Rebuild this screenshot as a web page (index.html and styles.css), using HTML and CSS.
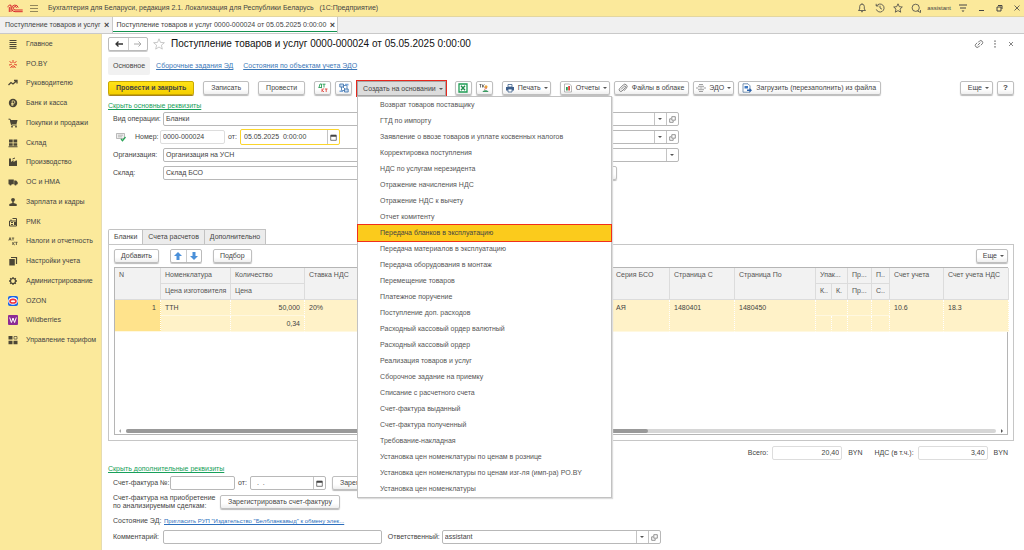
FILE: index.html
```html
<!DOCTYPE html>
<html lang="ru">
<head>
<meta charset="utf-8">
<title>Поступление товаров и услуг</title>
<link rel="stylesheet" href="styles.css">
</head>
<body>
<svg class="defs" aria-hidden="true">
  <symbol id="open" viewBox="0 0 10 10"><path d="M4 1h5v5H4zM3 4H1v5h5V7" fill="none" stroke="#666"/></symbol>
  <symbol id="cal" viewBox="0 0 10 10"><path d="M1 2h8v7H1z" fill="#fff" stroke="#444"/><path d="M1 1h8v3H1z" fill="#444"/></symbol>
</svg>

<header class="topbar">
  <svg class="logo" viewBox="0 0 16 9"><path d="M.5 2.800 2.500 1.200H4V8M2.300 3v5" fill="none" stroke="#d8262c" stroke-width="1"/><path d="M11.200 3.600A3.300 3.300 0 1 0 8 7.700h7.700M9.700 3.700a1.700 1.700 0 1 0-1.700 2.300h7.700" fill="none" stroke="#d8262c" stroke-width="1"/></svg>
  <svg class="burger" viewBox="0 0 8 8"><path d="M0 1.500h8M0 4.500h8M0 7.500h8" stroke="#665f40" stroke-width=".7"/></svg>
  <span class="app-title">Бухгалтерия для Беларуси, редакция 2.1. Локализация для Республики Беларусь &nbsp; (1С:Предприятие)</span>
  <div class="top-tools">
    <svg viewBox="0 0 10 10"><path d="M1.5 7.5h7L7.3 6V3.5a2.3 2.3 0 0 0-4.6 0V6zM4 8.7h2M5 1V.3" fill="none" stroke="#444" stroke-width=".8"/></svg>
    <svg viewBox="0 0 10 10"><path d="M1.6 3A4 4 0 1 1 1.3 6.4M1.2.8V3h2.3M5 2.7V5l2 1.2" fill="none" stroke="#444" stroke-width=".8"/></svg>
    <svg viewBox="0 0 10 10"><path d="m5 .8 1.3 2.9 3 .3L7 6.1l.7 3.1L5 7.6 2.300 9.200 3 6.100.700 4l3-.3z" fill="none" stroke="#444" stroke-width=".8"/></svg>
    <svg viewBox="0 0 10 10"><path d="M8.300 4.800a3.600 3.600 0 1 0-7.200 0 3.600 3.600 0 0 0 7.200 0zM6.500 8l3 1.500V7" fill="none" stroke="#444" stroke-width=".8"/></svg>
    <span class="user">assistant</span>
    <svg viewBox="0 0 10 10"><path d="M1 2h8M2 5h6" stroke="#444"/><path d="M3.500 7.500h3L5 9z" fill="#444"/></svg>
    <svg viewBox="0 0 10 10"><path d="M3 7.500h5" stroke="#444"/></svg>
    <svg viewBox="0 0 10 10"><path d="M4 2.500h4v3.500M3 4h4v4H3z" fill="none" stroke="#444"/></svg>
    <svg viewBox="0 0 10 10"><path d="m2.500 2.500 5 5m0-5-5 5" stroke="#444" stroke-width=".8"/></svg>
  </div>
</header>

<nav class="tabs" aria-label="Открытые окна">
  <div class="tab"><a href="#">Поступление товаров и услуг</a><button type="button" aria-label="Закрыть">×</button></div>
  <div class="tab active"><a href="#">Поступление товаров и услуг 0000-000024 от 05.05.2025 0:00:00</a><button type="button" aria-label="Закрыть">×</button></div>
</nav>

<div class="shell">
<nav class="side" aria-label="Разделы">
  <div class="side-list">
  <a href="#"><svg viewBox="0 0 10 10"><path d="M1.500 1.500h7M1.500 3.500h7M1.500 5.500h7M1.500 7.500h7M1.500 9.300h7" stroke="#4b4636" stroke-width="1"/></svg>Главное</a>
  <a href="#"><svg viewBox="0 0 10 10"><path d="M5 1v3M5 6v3M1.500 2.500l2.300 1.500M8.500 2.500 6.200 4M1 6l2.700-.5M9 6l-2.700-.5M2.500 9l1.400-2M7.500 9 6.100 7" stroke="#e0402c" stroke-width="1"/></svg>PO.BY</a>
  <a href="#"><svg viewBox="0 0 10 10"><path d="m.5 7 2.500-2.500L5 6l3.500-3M6 2.500h3v3" fill="none" stroke="#4b4636" stroke-width="1.300"/></svg>Руководителю</a>
  <a href="#"><svg viewBox="0 0 10 10"><circle cx="5" cy="5" r="4.200" fill="#4b4636"/><path d="M4.200 8V2.800h1.300a1.300 1.300 0 0 1 0 2.700H3.200M3.200 6.800h2.600" fill="none" stroke="#fbe99b" stroke-width=".8"/></svg>Банк и касса</a>
  <a href="#"><svg viewBox="0 0 10 10"><path d="M.5 1.200h1.700L3.500 7h5.200" fill="none" stroke="#4b4636"/><path d="M2.200 2h7.300L8.500 6h-5.500z" fill="#4b4636"/><circle cx="4" cy="8.700" r=".9" fill="#4b4636"/><circle cx="8" cy="8.700" r=".9" fill="#4b4636"/></svg>Покупки и продажи</a>
  <a href="#"><svg viewBox="0 0 10 10"><path d="M1 1.500h3.700v3H1zM5.500 1.500h3.700v3H5.500zM1 5.300h3.700v2.500H1zM5.500 5.300h3.700v2.500H5.500zM.5 8.300h9v1h-9z" fill="#4b4636"/></svg>Склад</a>
  <a href="#"><svg viewBox="0 0 10 10"><path d="M1 9V1.500h2V5l2.500-2v2L8 3.500h1V9z" fill="#4b4636"/><path d="M4.500 2 7 1" stroke="#4b4636"/></svg>Производство</a>
  <a href="#"><svg viewBox="0 0 10 10"><path d="M.5 2.500h5.300v4.700H.5zM6.200 3.500h2l1.500 1.700v2H6.200z" fill="#4b4636"/><circle cx="2.500" cy="7.500" r="1.100" fill="#4b4636"/><circle cx="7.500" cy="7.500" r="1.100" fill="#4b4636"/></svg>ОС и НМА</a>
  <a href="#"><svg viewBox="0 0 10 10"><circle cx="5" cy="2.800" r="1.900" fill="#4b4636"/><path d="M4.300 4h1.400v2l3 1v2H1.300V7l3-1z" fill="#4b4636"/></svg>Зарплата и кадры</a>
  <a href="#"><svg viewBox="0 0 10 10"><path d="M1.500 4h7v5h-7zM4.500 1.500h4V4M3 4V2.500" fill="none" stroke="#4b4636"/><path d="M3 5h2v1H3zM3 7h2v1H3zM6 5h2v3H6z" fill="#4b4636"/></svg>РМК</a>
  <a href="#"><svg viewBox="0 0 10 10"><path d="m.8 4.500 1.200-3 1.200 3M1.200 3.600h1.600M3.800 2h2.400M5 2v2.500M4.800 6v3M6.800 6 5 7.500 6.800 9M7.300 6.300h2.200M8.400 6.300V9" fill="none" stroke="#4b4636" stroke-width=".8"/></svg>Налоги и отчетность</a>
  <a href="#"><svg viewBox="0 0 10 10"><path d="M1.300 3h5.500v6.500H1.300z" fill="#4b4636"/><path d="M3 1.500h5.500V8" fill="none" stroke="#4b4636" stroke-width="1.200"/></svg>Настройки учета</a>
  <a href="#"><svg viewBox="0 0 10 10"><circle cx="5" cy="5" r="2.500" fill="none" stroke="#4b4636" stroke-width="1.200"/><path d="M5 1v1.500M5 7.500V9M1 5h1.500M7.500 5H9M2.200 2.200l1 1M6.800 6.800l1 1M7.800 2.200l-1 1M3.200 6.800l-1 1" stroke="#4b4636" stroke-width="1.300"/></svg>Администрирование</a>
  <a href="#"><svg viewBox="0 0 10 10"><rect width="10" height="10" rx="2" fill="#1764e8"/><ellipse cx="5" cy="5" rx="4.800" ry="3.800" fill="#fff"/><ellipse cx="5" cy="5.200" rx="3" ry="1.800" fill="#fff" stroke="#f0323c" stroke-width="1.600"/></svg>OZON</a>
  <a href="#"><svg viewBox="0 0 10 10"><rect width="10" height="10" rx="1" fill="#8d2a95"/><path d="M1.700 2.500 3.400 7.500 5 3l1.600 4.500 1.700-5" fill="none" stroke="#fff"/></svg>Wildberries</a>
  <a href="#"><svg viewBox="0 0 10 10"><path d="M.5 1h4v3.500h-4zM.5 5.800h4v3.500h-4zM5.500 5.800h4v3.500h-4z" fill="#4b4636"/><path d="M6 1.500h3v2.600H6z" fill="none" stroke="#4b4636" stroke-width=".7"/></svg>Управление тарифом</a>
  </div>
</nav>

<main class="main">
  <div class="title-row">
    <div class="pair">
      <button type="button" aria-label="Назад"><svg viewBox="0 0 10 10"><path d="M9 5H2M4.500 2.500 2 5l2.500 2.500" fill="none" stroke="#333" stroke-width="1.300"/></svg></button>
      <button type="button" aria-label="Вперед"><svg viewBox="0 0 10 10"><path d="M1 5h7M5.500 2.500 8 5 5.500 7.500" fill="none" stroke="#aaa"/></svg></button>
    </div>
    <svg class="star" viewBox="0 0 12 12"><path d="m6 .8 1.500 3.600 3.900.3-3 2.500.9 3.900L6 9l-3.300 2.100.9-3.900-3-2.500 3.900-.3z" fill="none" stroke="#bbb" stroke-width=".8"/></svg>
    <h1>Поступление товаров и услуг 0000-000024 от 05.05.2025 0:00:00</h1>
    <div class="title-tools">
      <svg viewBox="0 0 10 10"><path d="M4 3.500 5.500 2a2 2 0 0 1 2.800 2.800L7 6M6 6.500 4.500 8a2 2 0 0 1-2.800-2.800L3 4M3.700 6.300l2.600-2.600" fill="none" stroke="#555" stroke-width=".8"/></svg>
      <svg viewBox="0 0 10 10"><path d="M5 1.500v1.300M5 4.300v1.300M5 7.200v1.300" stroke="#555" stroke-width="1.300"/></svg>
      <svg viewBox="0 0 10 10"><path d="m3 3 4 4m0-4-4 4" stroke="#666" stroke-width=".8"/></svg>
    </div>
  </div>

  <nav class="links">
    <a class="current" href="#">Основное</a>
    <a href="#">Сборочные задания ЭД</a>
    <a href="#">Состояния по объектам учета ЭДО</a>
  </nav>

  <div class="toolbar">
    <button type="button" class="btn primary">Провести и закрыть</button>
    <button type="button" class="btn gap">Записать</button>
    <button type="button" class="btn gap">Провести</button>
    <button type="button" class="btn sq gap" aria-label="Дт Кт"><svg viewBox="0 0 10 10"><path d="M.5 4.500h3.500M1 4.500 2 1h1.500v3.500M4.500 1.200h3M6 1.200v3.300" fill="none" stroke="#2a9d55" stroke-width=".9"/><path d="M4 5.500V9M6 5.500 4.200 7.200 6 9M6.800 6h2.700M8.200 6v3" fill="none" stroke="#e0443c" stroke-width=".9"/></svg></button>
    <button type="button" class="btn sq" aria-label="Структура"><svg viewBox="0 0 10 10"><path d="M.8 1h3.700v3H.8zM5.500 6h3.700v3H5.500z" fill="#c9dcf2" stroke="#3b6ea8" stroke-width=".8"/><path d="M2.500 4v3.500h3M4.500 2.500H8V6M4 4l2 2" fill="none" stroke="#3b6ea8" stroke-width=".8"/><path d="M6 .8h3.500v1.700H6zM.5 7.500h3.500V9H.5z" fill="#7da7d9"/></svg></button>
    <div class="menu-anchor">
      <button type="button" class="btn pressed" aria-haspopup="menu" aria-expanded="true">Создать на основании<i class="caret"></i></button>
      <ul class="menu">
        <li><a href="#">Возврат товаров поставщику</a></li>
        <li><a href="#">ГТД по импорту</a></li>
        <li><a href="#">Заявление о ввозе товаров и уплате косвенных налогов</a></li>
        <li><a href="#">Корректировка поступления</a></li>
        <li><a href="#">НДС по услугам нерезидента</a></li>
        <li><a href="#">Отражение начисления НДС</a></li>
        <li><a href="#">Отражение НДС к вычету</a></li>
        <li><a href="#">Отчет комитенту</a></li>
        <li><a class="selected" href="#">Передача бланков в эксплуатацию</a></li>
        <li><a href="#">Передача материалов в эксплуатацию</a></li>
        <li><a href="#">Передача оборудования в монтаж</a></li>
        <li><a href="#">Перемещение товаров</a></li>
        <li><a href="#">Платежное поручение</a></li>
        <li><a href="#">Поступление доп. расходов</a></li>
        <li><a href="#">Расходный кассовый ордер валютный</a></li>
        <li><a href="#">Расходный кассовый ордер</a></li>
        <li><a href="#">Реализация товаров и услуг</a></li>
        <li><a href="#">Сборочное задание на приемку</a></li>
        <li><a href="#">Списание с расчетного счета</a></li>
        <li><a href="#">Счет-фактура выданный</a></li>
        <li><a href="#">Счет-фактура полученный</a></li>
        <li><a href="#">Требование-накладная</a></li>
        <li><a href="#">Установка цен номенклатуры по ценам в рознице</a></li>
        <li><a href="#">Установка цен номенклатуры по ценам изг-ля (имп-ра) PO.BY</a></li>
        <li><a href="#">Установка цен номенклатуры</a></li>
      </ul>
    </div>
    <button type="button" class="btn sq gap" aria-label="Excel"><svg viewBox="0 0 10 10"><path d="M1 1h8v8H1z" fill="#fff" stroke="#1f9d55" stroke-width="1.300"/><path d="m3 2.800 4 4.400m0-4.400L3 7.200" stroke="#1f8a4a" stroke-width="1.300"/></svg></button>
    <button type="button" class="btn sq" aria-label="Заполнить"><svg viewBox="0 0 10 10"><path d="M.5 1.500h2M1.500 1.500v3M3.500 1.500v3M5.500 1.500 3.700 3l1.800 1.500" fill="none" stroke="#555" stroke-width=".8"/><circle cx="7" cy="3.800" r="1.500" fill="#e8a33c"/><path d="M3.500 9c.5-2.500 5.500-2.500 6 0z" fill="#3c9a62"/><path d="M5 6.500 8 5" stroke="#d44" stroke-width=".7"/></svg></button>
    <button type="button" class="btn gap icon drop"><svg viewBox="0 0 10 10"><path d="M1 4h8v3.500H1z" fill="#3e5f8c"/><path d="M3 1.500h4V4H3zM3 6h4v3H3z" fill="#fff" stroke="#3e5f8c" stroke-width=".8"/></svg>Печать<i class="caret"></i></button>
    <button type="button" class="btn gap icon drop"><svg viewBox="0 0 10 10"><path d="M1.500 1h5L8.500 3v6h-7z" fill="#fff" stroke="#999" stroke-width=".7"/><path d="M3 4h1.800v3.500H3z" fill="#2a9d55"/><path d="M5.200 3H7v4.500H5.200z" fill="#e0443c"/></svg>Отчеты<i class="caret"></i></button>
    <button type="button" class="btn icon"><svg viewBox="0 0 10 10"><path d="M3 6.500 6.200 3.300a.8.8 0 0 1 1.200 1.200L4 8a1.700 1.700 0 0 1-2.400-2.400l3.600-3.600a2.200 2.200 0 0 1 3.300 3L6 7.800" fill="none" stroke="#666" stroke-width=".8"/></svg>Файлы в облаке</button>
    <button type="button" class="btn icon drop"><svg viewBox="0 0 10 10"><path d="M3 1.500h4M3 8.500h4M0 5h2.500M7.500 5H10M2 3.300h6M2 6.700h6M3.500 5h3" stroke="#888" stroke-width=".8"/></svg>ЭДО<i class="caret"></i></button>
    <button type="button" class="btn icon"><svg viewBox="0 0 10 10"><path d="M1 .8h5l2 2v6.400H1z" fill="#fff" stroke="#55789f" stroke-width=".8"/><path d="M2.500 3h3.500v2.500H2.500z" fill="#3b77c2"/><path d="M5 6.500h2.500V5L10 7.300 7.500 9.500V8H5z" fill="#2a62ad"/></svg>Загрузить (перезаполнить) из файла</button>
    <button type="button" class="btn push">Еще<i class="caret"></i></button>
    <button type="button" class="btn sq help">?</button>
  </div>

  <a class="green" href="#">Скрыть основные реквизиты</a>

  <div class="form">
    <div class="row">
      <label class="lab" for="op">Вид операции:</label>
      <div class="field grow"><input id="op" type="text" value="Бланки"><button type="button" aria-label="Выбрать"><i class="caret"></i></button><button type="button" aria-label="Открыть"><svg><use href="#open"/></svg></button></div>
    </div>
    <div class="row">
      <label class="lab num" for="num"><svg viewBox="0 0 10 10"><path d="M.5 1.500h8v5h-8z" fill="#eee" stroke="#aaa" stroke-width=".8"/><path d="M2 3.200h5M2 4.800h4" stroke="#999" stroke-width=".6"/><path d="m5 7 1.500 1.700L9.500 5" fill="none" stroke="#2ba557" stroke-width="1.300"/></svg>Номер:</label>
      <div class="field soft short"><input id="num" type="text" value="0000-000024"></div>
      <label class="mini" for="date">от:</label>
      <div class="field focus date"><input id="date" type="text" value="05.05.2025  0:00:00"><button type="button" aria-label="Календарь"><svg><use href="#cal"/></svg></button></div>
      <div class="field grow second"><input type="text" aria-label="Договор"><button type="button" aria-label="Выбрать"><i class="caret"></i></button><button type="button" aria-label="Открыть"><svg><use href="#open"/></svg></button></div>
    </div>
    <div class="row">
      <label class="lab" for="org">Организация:</label>
      <div class="field grow"><input id="org" type="text" value="Организация на УСН"><button type="button" aria-label="Выбрать"><i class="caret"></i></button></div>
    </div>
    <div class="row stock">
      <label class="lab" for="stock">Склад:</label>
      <div class="field grow"><input id="stock" type="text" value="Склад БСО"></div>
      <button type="button" class="btn wide" aria-label="Расчеты"></button>
    </div>
  </div>

  <div class="page-tabs">
    <button type="button" class="on">Бланки</button><button type="button">Счета расчетов</button><button type="button">Дополнительно</button>
  </div>
  <section class="panel">
    <div class="panel-bar">
      <button type="button" class="btn">Добавить</button>
      <div class="pair blue">
        <button type="button" aria-label="Вверх"><svg viewBox="0 0 10 10"><path d="m5 1 4 4H6.500v4h-3V5H1z" fill="#4a90d9"/></svg></button>
        <button type="button" aria-label="Вниз"><svg viewBox="0 0 10 10"><path d="m5 9 4-4H6.500V1h-3v4H1z" fill="#4a90d9"/></svg></button>
      </div>
      <button type="button" class="btn">Подбор</button>
      <button type="button" class="btn push">Еще<i class="caret"></i></button>
    </div>
    <div class="grid">
      <table>
        <colgroup><col class="w46"><col class="w70"><col class="w74"><col class="w66"><col class="w241"><col class="w58"><col class="w65"><col class="w81"><col class="w16"><col class="w16"><col class="w24"><col class="w18"><col class="w54"><col class="w65"></colgroup>
        <thead>
          <tr><th rowspan="2">N</th><th>Номенклатура</th><th>Количество</th><th rowspan="2">Ставка НДС</th><th rowspan="2"></th><th rowspan="2">Серия БСО</th><th rowspan="2">Страница С</th><th rowspan="2">Страница По</th><th colspan="2">Упак...</th><th>Пр...</th><th>П..</th><th rowspan="2">Счет учета</th><th rowspan="2">Счет учета НДС</th></tr>
          <tr><th>Цена изготовителя</th><th>Цена</th><th>К..</th><th>К.</th><th>Пр...</th><th>С..</th></tr>
        </thead>
        <tbody>
          <tr><td rowspan="2" class="n">1</td><td>ТТН</td><td class="r">50,000</td><td rowspan="2">20%</td><td rowspan="2"></td><td rowspan="2">АЯ</td><td rowspan="2">1480401</td><td rowspan="2">1480450</td><td colspan="2"></td><td></td><td></td><td rowspan="2">10.6</td><td rowspan="2">18.3</td></tr>
          <tr><td></td><td class="r">0,34</td><td></td><td></td><td></td><td></td></tr>
        </tbody>
      </table>
      <div class="scroll"><i class="left"></i><div class="track"><div class="thumb"></div></div><i class="right"></i></div>
    </div>
  </section>

  <div class="totals">
    <label for="sum">Всего:</label><div class="field soft total"><input id="sum" type="text" value="20,40"></div><span class="cur">BYN</span>
    <label for="vat">НДС (в т.ч.):</label><div class="field soft total"><input id="vat" type="text" value="3,40"></div><span>BYN</span>
  </div>

  <a class="green" href="#">Скрыть дополнительные реквизиты</a>

  <div class="extra">
    <div class="row">
      <label class="lab2" for="sf">Счет-фактура №:</label>
      <div class="field short"><input id="sf" type="text"></div>
      <label class="mini" for="sfd">от:</label>
      <div class="field sfdate"><input id="sfd" type="text" value="  .  ."><button type="button" aria-label="Календарь"><svg><use href="#cal"/></svg></button></div>
      <button type="button" class="btn reg">Зарегистрировать</button>
    </div>
    <div class="row tall">
      <span class="lab3">Счет-фактура на приобретение по анализируемым сделкам:</span>
      <button type="button" class="btn">Зарегистрировать счет-фактуру</button>
    </div>
    <div class="row">
      <span class="lab">Состояние ЭД:</span>
      <a class="ed" href="#">Пригласить РУП "Издательство "Белбланкавыд" к обмену элек...</a>
    </div>
    <div class="row">
      <label class="lab" for="com">Комментарий:</label>
      <div class="field grow"><input id="com" type="text"></div>
      <label class="resp" for="resp">Ответственный:</label>
      <div class="field grow"><input id="resp" type="text" value="assistant"><button type="button" aria-label="Выбрать"><i class="caret"></i></button><button type="button" aria-label="Открыть"><svg><use href="#open"/></svg></button></div>
    </div>
  </div>
</main>
</div>
</body>
</html>
```

FILE: styles.css
```css
* { box-sizing: border-box; }
body {
  margin: 0;
  min-height: 100vh;
  display: flex;
  flex-direction: column;
  background: #fff;
  color: #444;
  font: 7px/10px "Liberation Sans", Arial, sans-serif;
}
button, input { font: inherit; color: inherit; margin: 0; }
button { display: inline-flex; align-items: center; justify-content: center; padding: 0; border: 0; background: none; white-space: nowrap; }
a { color: inherit; }
svg { width: 10px; height: 10px; flex: none; display: block; }
.defs { position: absolute; width: 0; height: 0; }

.topbar { display: flex; align-items: center; height: 17px; padding: 0 2px 0 7px; background: #fbe99b; border-bottom: 1px solid #e3d6a0; }
.logo { width: 16px; height: 9px; }
.burger { width: 8px; height: 8px; margin-left: 7px; }
.app-title { margin-left: 10px; }
.top-tools { display: flex; align-items: center; gap: 8px; margin-left: auto; }
.user { margin: 0 -1px 0 -2px; font-size: 6px; }

.tabs { display: flex; height: 17px; background: #f0f0f0; border-bottom: 1px solid #c9c9c9; }
.tab { display: flex; align-items: center; gap: 3px; padding: 0 2px 0 5px; border-right: 1px solid #c9c9c9; }
.tab a { text-decoration: none; }
.tab button { width: 6px; font-size: 9px; font-weight: bold; }
.tab.active { padding-left: 4px; background: #fff; box-shadow: inset 0 -1px #fff, inset 0 -2px #149350; }

.shell { flex: 1; display: flex; }
.side { flex: none; width: 102px; background: #fbe99b; border-right: 1px solid #e6dcb0; }
.side-list { display: grid; grid-auto-rows: 1fr; height: 316px; }
.side a { display: flex; align-items: center; gap: 8px; padding-left: 8px; text-decoration: none; color: #444; }

.main { flex: 1; min-width: 0; display: flex; flex-direction: column; padding: 3px 10px 6px 6px; }
.title-row { display: flex; align-items: center; height: 14px; }
.pair { display: flex; border: 1px solid #bbb; border-radius: 2px; box-shadow: 0 1px #ccc; }
.pair button { width: 19px; height: 12px; }
.pair button + button { border-left: 1px solid #ccc; }
.star { width: 12px; height: 12px; margin: 0 6px 0 5px; }
h1 { margin: 0; font-size: 10px; line-height: 14px; font-weight: normal; color: #111; }
.title-tools { display: flex; gap: 6px; margin-left: auto; margin-right: -2px; }

.links { display: flex; align-items: center; gap: 10px; margin-top: 6px; color: #3c78b8; }
.links .current { margin-right: -4px; padding: 4px 5px; border-radius: 2px; background: #f1f1f1; color: #444; text-decoration: none; }

.toolbar { display: flex; gap: 4px; margin: 6px 0 5px; height: 15px; }
.btn { height: 14px; padding: 0 7px; border: 1px solid #bfbfbf; border-radius: 2px; background: linear-gradient(#fff 60%, #efefef); box-shadow: 0 1px 1px #bbb; }
.btn.gap { margin-left: 5px; }
.btn.sq { width: 17px; padding: 0; }
.btn.icon { gap: 4px; padding: 0 4px 0 3px; }
.btn.drop { gap: 3px; padding: 0 2px; }
.btn.primary { background: linear-gradient(#ffe318, #f5cf00); border-color: #c9a800; box-shadow: 0 1px #a8831c; font-weight: bold; }
.btn.push { margin-left: auto; padding: 0 3px 0 7px; }
.btn.help { font-weight: bold; font-size: 8px; }
.caret { flex: none; margin-left: 3px; border: 2px solid transparent; border-top-color: #555; border-bottom: 0; }
.btn.icon .caret { margin-left: 0; }

.menu-anchor { position: relative; margin-left: 1px; outline: 1px solid #e6281e; }
.btn.pressed { height: 15px; padding: 0 2px 0 5px; background: #dcdcdc; border-color: #a5a5a5; box-shadow: none; border-radius: 0; }
.menu { position: absolute; z-index: 2; top: 15px; left: 0; width: 255px; margin: 0; padding: 0; list-style: none; background: #fff; border: 1px solid #c2c2c2; box-shadow: 1px 1px 1px #ddd; }
.menu a { display: block; height: 16px; padding-left: 22px; line-height: 16px; text-decoration: none; color: #555; }
.menu .selected { background: #fbcb1c; outline: 1px solid #f0301c; color: #444; }

.green { align-self: flex-start; color: #17a05a; }
.form, .extra { display: grid; padding-left: 5px; }
.form { width: 63%; gap: 4px; margin-top: 1px; }
.row { display: flex; align-items: center; height: 14px; }
.lab { flex: none; width: 50px; }
.lab.num { display: flex; align-items: center; gap: 9px; width: 47px; padding-left: 3px; }
.mini { width: 15px; text-align: center; }
.field { display: flex; height: 14px; border: 1px solid #b8b8b8; border-radius: 2px; background: #fff; overflow: hidden; }
.field input { flex: 1; width: 0; min-width: 0; border: 0; padding: 0 2px; background: none; outline: none; white-space: pre; }
.field button { width: 12px; border-left: 1px solid #c4c4c4; }
.field .caret { margin: 0; }
.field button svg { width: 7px; height: 7px; }
.grow { flex: 1; min-width: 0; }
.soft { border-color: #ddd; }
.short { width: 65px; }
.date { width: 100px; }
.field.focus { height: 16px; border: 1px solid #fbd52c; }
.focus input { padding-left: 3px; }
.second { margin-left: 80px; }
.stock { width: calc(100% - 62px); }
.wide { width: 120px; margin-left: 5px; }

.page-tabs { display: flex; margin-top: 49px; }
.page-tabs button { height: 15px; padding: 0 5px; border: 1px solid #c2c2c2; border-left: 0; border-bottom: 0; background: #ececec; }
.page-tabs .on { border-left: 1px solid #c2c2c2; border-radius: 2px 0 0 0; background: #fff; }
.panel { flex: 1; display: flex; flex-direction: column; border: 1px solid #c6c6c6; padding: 4px 5px 5px; }
.panel-bar { display: flex; align-items: center; gap: 11px; margin-bottom: 4px; }
.panel-bar .btn { padding: 0 6px; }
.panel-bar .push { padding-right: 3px; }
.pair.blue button { width: 15px; }
.grid { flex: 1; display: flex; flex-direction: column; border: 1px solid #b5b5b5; }
table { width: 100%; table-layout: fixed; border-collapse: separate; border-spacing: 0; }
th, td { height: 16px; font-weight: normal; text-align: left; vertical-align: top; white-space: nowrap; overflow: hidden; }
th { padding: 2px 4px; background: #f2f2f2; border-right: 1px solid #dcdcdc; border-bottom: 1px solid #dcdcdc; color: #555; }
td { padding: 3px 4px 2px; background: #fff2c8; border-right: 1px dotted #fff; border-bottom: 1px solid #fff8e0; }
td.n { background: #ffe38c; text-align: right; }
td.r { text-align: right; }
.w16 { width: 16px; } .w18 { width: 18px; } .w24 { width: 24px; } .w46 { width: 46px; }
.w54 { width: 54px; } .w58 { width: 58px; } .w65 { width: 65px; } .w66 { width: 66px; }
.w70 { width: 70px; } .w74 { width: 74px; } .w81 { width: 81px; } .w241 { width: 241px; }
.scroll { display: flex; align-items: center; gap: 5px; margin-top: auto; padding: 0 4px 1px; }
.scroll i { border: 2px solid transparent; }
.scroll .left { border-right-color: #aaa; border-left: 0; }
.scroll .right { border-left-color: #555; border-right: 0; }
.track { flex: 1; height: 4px; border-radius: 2px; background: #d6d6d6; }
.thumb { width: 60%; height: 4px; border-radius: 2px; background: #999; }

.totals { display: flex; align-items: center; justify-content: flex-end; gap: 4px; margin-top: 5px; padding-right: 6px; }
.total { width: 70px; }
.total input { text-align: right; }
.totals span { margin-left: 2px; }
.cur { margin-right: 8px; }
.totals + .green { margin-top: 4px; }

.extra { gap: 2px; margin-top: 2px; width: 61%; }
.lab2 { width: 57px; }
.sfdate { width: 76px; }
.reg { margin-left: 6px; }
.row.tall { height: 20px; }
.lab3 { width: 107px; line-height: 8px; }
.ed { margin-left: 1px; font-size: 6px; color: #2c6fbd; }
.resp { margin: 0 2px 0 6px; }
```
